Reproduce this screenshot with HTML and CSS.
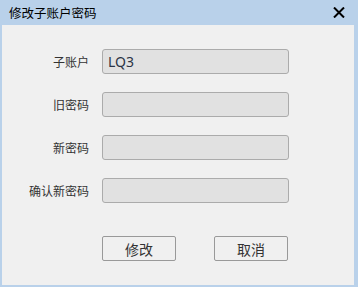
FILE: index.html
```html
<!DOCTYPE html>
<html lang="zh-CN">
<head>
    <meta charset="UTF-8">
    <title>修改子账户密码</title>
    <link rel="stylesheet" href="styles.css">
</head>
<body>

<div class="fenetre">
    <div class="barre-titre">
        <span class="titre">修改子账户密码</span>
        <svg class="fermer" width="12" height="11" viewBox="0 0 12 11">
            <path d="M1 0.5 L11 10.5 M11 0.5 L1 10.5" stroke="#000" stroke-width="2"/>
        </svg>
    </div>
    <div class="contenu">
        <div class="formulaire">
            <label>子账户</label>
            <div class="champ">LQ3</div>
            <label>旧密码</label>
            <div class="champ"></div>
            <label>新密码</label>
            <div class="champ"></div>
            <label>确认新密码</label>
            <div class="champ"></div>
        </div>
        <div class="boutons">
            <button>修改</button>
            <button>取消</button>
        </div>
    </div>
</div>

</body>
</html>
```

FILE: styles.css
```css
body {
    margin: 0;
    background: #b9d1ea;
    font-family: "Noto Sans CJK SC", "Noto Sans", sans-serif;
}

.fenetre {
    width: 358px;
    height: 287px;
    display: flex;
    flex-direction: column;
}

.barre-titre {
    height: 25px;
    display: flex;
    align-items: center;
    justify-content: space-between;
    padding: 0 13px 0 9px;
}

.titre {
    font-size: 12.5px;
    color: #000;
}

.contenu {
    flex: 1;
    margin: 0 4px 2px 2px;
    background: #f0f0f0;
    padding-top: 24px;
}

.formulaire {
    display: grid;
    grid-template-columns: 87px 187px;
    column-gap: 13px;
    row-gap: 18px;
    align-items: center;
}

.formulaire label {
    text-align: right;
    font-size: 12px;
    color: #333;
}

.champ {
    height: 25px;
    box-sizing: border-box;
    border: 1px solid #ababab;
    border-radius: 3px;
    background: #e1e1e1;
    font-family: "Noto Sans", sans-serif;
    font-size: 14px;
    line-height: 23px;
    padding-left: 5px;
    color: #2b3445;
}

.boutons {
    display: flex;
    gap: 38px;
    margin: 33px 0 0 100px;
}

button {
    width: 74px;
    height: 25px;
    border: 1px solid #999;
    border-radius: 2px;
    background: #f0f0f0;
    font-family: "Noto Sans CJK SC", sans-serif;
    font-size: 14px;
    color: #333;
    padding: 0;
}
```
